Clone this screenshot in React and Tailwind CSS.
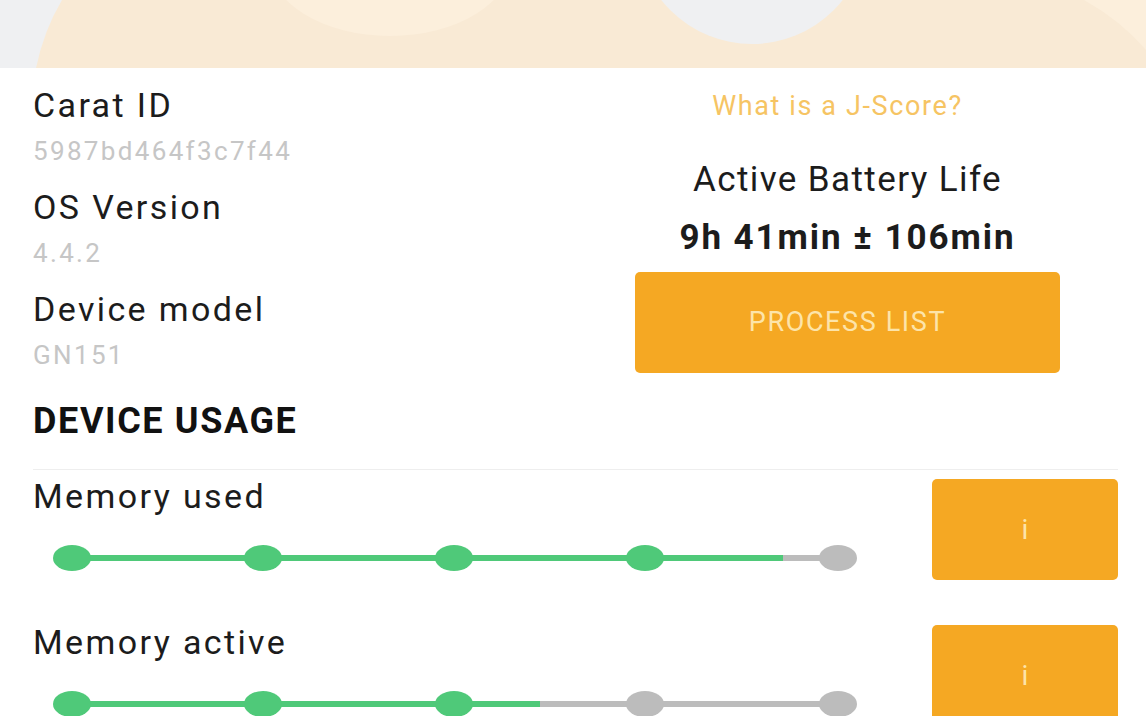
import React from "react";

const info = [
  { label: "Carat ID", value: "5987bd464f3c7f44" },
  { label: "OS Version", value: "4.4.2" },
  { label: "Device model", value: "GN151" },
];

const usage = [
  { label: "Memory used", fill: 730, active: 4 },
  { label: "Memory active", fill: 487, active: 3 },
];

const dots = [19, 210, 401, 592, 785];

function HeaderArt() {
  return (
    <svg width="1146" height="68" viewBox="0 0 1146 68" className="block">
      <rect width="1146" height="68" fill="#eff0f2" />
      <path d="M62 0 L1146 0 L1146 68 L36 68 Q44 30 62 0 Z" fill="#f9ead5" />
      <ellipse cx="390" cy="-40" rx="122" ry="76" fill="#fcefdc" />
      <ellipse cx="752" cy="-70" rx="115" ry="114" fill="#eff0f2" />
      <path d="M1084 0 Q1120 20 1146 50 L1146 0 Z" fill="#fcefdc" />
    </svg>
  );
}

function Steps({ fill, active }) {
  return (
    <svg width="806" height="30" viewBox="0 0 806 30" className="block">
      <line x1="19" y1="15" x2="785" y2="15" stroke="#bcbcbc" strokeWidth="6" />
      <line x1="19" y1="15" x2={fill} y2="15" stroke="#4fc979" strokeWidth="6" />
      {dots.map((cx, i) => (
        <ellipse
          key={cx}
          cx={cx}
          cy="15"
          rx="19"
          ry="13"
          fill={i < active ? "#4fc979" : "#bcbcbc"}
        />
      ))}
    </svg>
  );
}

export default function App() {
  return (
    <div className="w-[1146px] h-[716px] overflow-hidden bg-white font-['Roboto',sans-serif]">
      <HeaderArt />

      <div className="pl-[33px] pr-[28px]">
        {/* Device info + battery */}
        <div className="flex">
          <div className="w-[602px] pt-[14px]">
            {info.map((row) => (
              <div key={row.label} className="h-[102px]">
                <p className="text-[34px] leading-[46px] text-[#1c1c1c] tracking-[0.07em]">
                  {row.label}
                </p>
                <p className="mt-[3px] text-[26px] leading-[40px] text-[#c6c6c6] tracking-[0.09em]">
                  {row.value}
                </p>
              </div>
            ))}
          </div>

          <div className="w-[425px] flex flex-col items-center pt-[22px]">
            <button className="text-[27px] leading-[32px] text-[#f6c463] -ml-[20px] tracking-[0.06em]">
              What is a J-Score?
            </button>
            <p className="mt-[38px] text-[35px] leading-[40px] text-[#1c1c1c] tracking-[0.04em]">
              Active Battery Life
            </p>
            <p className="mt-[18px] text-[35px] leading-[40px] font-bold text-[#1c1c1c] tracking-[0.055em]">
              9h 41min ± 106min
            </p>
            <button className="mt-[14px] w-full h-[101px] rounded-[5px] bg-[#f5a823] text-[27px] text-[#fde4a9] tracking-[0.06em]">
              PROCESS LIST
            </button>
          </div>
        </div>

        {/* Usage */}
        <h2 className="mt-[11px] text-[36px] leading-[44px] font-bold text-[#111] tracking-[0.045em]">
          DEVICE USAGE
        </h2>
        <div className="mt-[26px] border-t border-[#eeeeee]">
          {usage.map((row) => (
            <div key={row.label} className="flex items-start justify-between h-[146px] pt-[9px]">
              <div>
                <p className="-mt-[3px] text-[34px] leading-[40px] text-[#1c1c1c] tracking-[0.07em]">
                  {row.label}
                </p>
                <div className="mt-[27px] ml-[20px]">
                  <Steps fill={row.fill} active={row.active} />
                </div>
              </div>
              <button className="w-[186px] h-[101px] rounded-[5px] bg-[#f5a823] text-[28px] text-[#fde4a9]">
                i
              </button>
            </div>
          ))}
        </div>
      </div>
    </div>
  );
}
